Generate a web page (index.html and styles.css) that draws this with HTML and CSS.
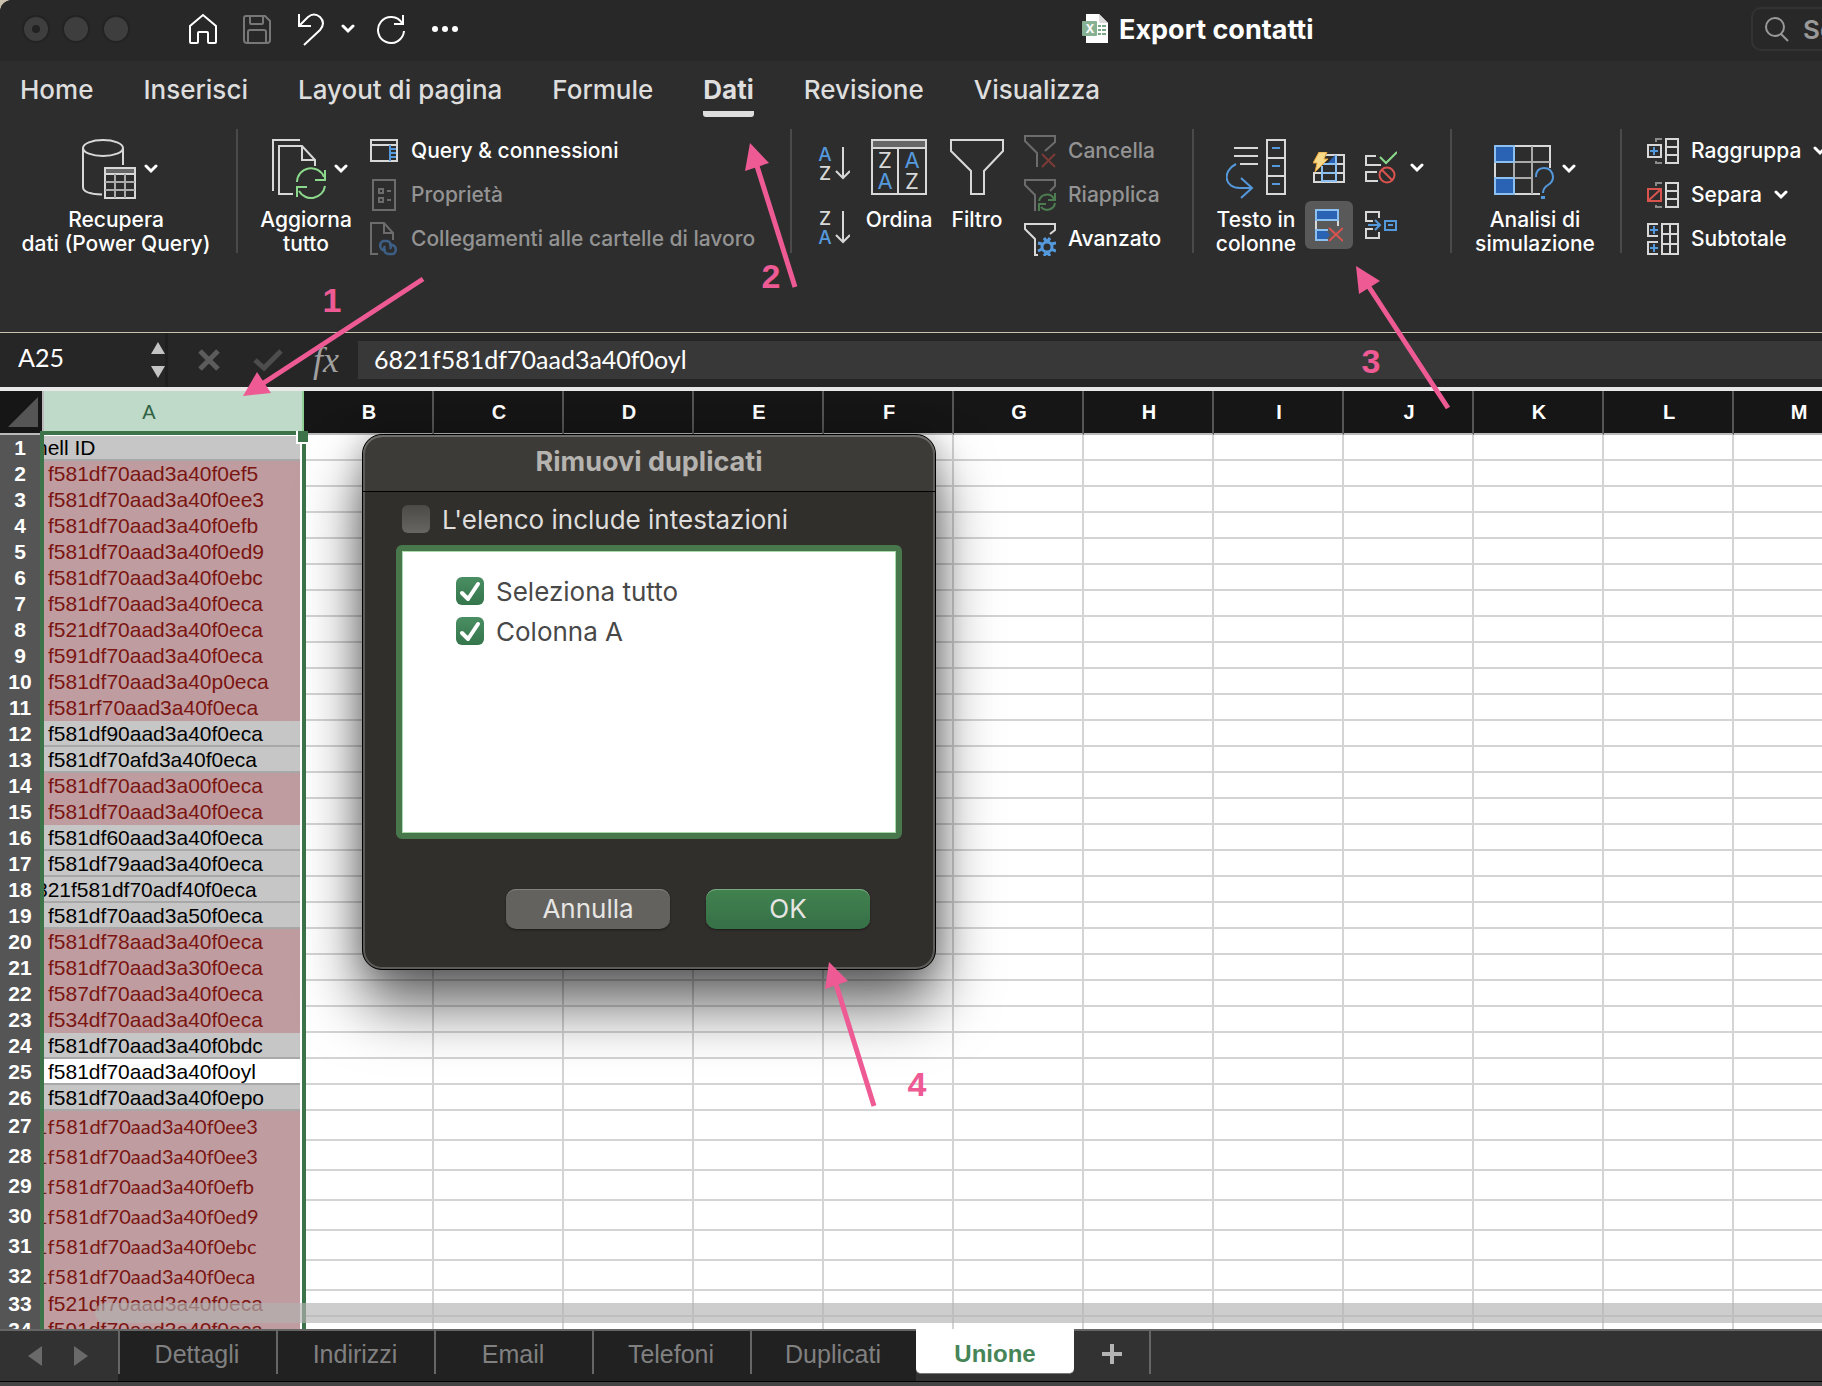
FILE: index.html
```html
<!DOCTYPE html>
<html lang="it">
<head>
    <meta charset="UTF-8">
    <meta name="viewport" content="width=device-width, initial-scale=1.0">
    <title>Export contatti</title>
    <link rel="stylesheet" href="styles.css">
</head>
<body>
<div class="app">
    <header class="titlebar">
        <div class="lights">
            <span class="light light-dot"></span>
            <span class="light"></span>
            <span class="light"></span>
        </div>
        <div class="quick">
            <button aria-label="Home"><svg width="30" height="32" viewBox="0 0 30 32"><path d="M2 29V13L15 2l13 11v16q0 1-1 1h-6q-1 0-1-1V20q0-1-1-1h-8q-1 0-1 1v9q0 1-1 1H3q-1 0-1-1z"/></svg></button>
            <button aria-label="Salva" class="dim"><svg width="30" height="32" viewBox="0 0 30 32"><path d="M4 3h19l5 5v19q0 3-3 3H5q-3 0-3-3V5q0-2 2-2zM8 3v7q0 1 1 1h11q1 0 1-1V3M6 30V19q0-2 2-2h14q2 0 2 2v11"/></svg></button>
            <button aria-label="Annulla"><svg width="30" height="34" viewBox="0 0 30 34"><path d="M3 2v12h12M3 14L12 5q6-5 12 0 6 6 0 13L8 33"/></svg></button>
            <button aria-label="Altre azioni" class="quick-chev"><svg class="chev" width="14" height="10" viewBox="0 0 14 10"><path d="M2 2l5 5 5-5"/></svg></button>
            <button aria-label="Ripeti"><svg width="30" height="32" viewBox="0 0 30 32"><path d="M26 10A13 13 0 1 0 28 18M27 2v9h-9"/></svg></button>
            <button aria-label="Altro" class="more"><svg width="30" height="10" viewBox="0 0 30 10"><circle cx="5" cy="5" r="3"/><circle cx="15" cy="5" r="3"/><circle cx="25" cy="5" r="3"/></svg></button>
        </div>
        <div class="doc-title">
            <svg width="28" height="32" viewBox="0 0 28 32">
                <path d="M5 1h13l9 9v20H5z" fill="#fff"/><path d="M18 1l9 9h-7q-2 0-2-2z" fill="#dcdcdc"/>
                <rect x="1" y="8" width="15" height="15" rx="1" fill="#86b193"/>
                <path d="M17 12h3v2h-3zM21 12h4v2h-4zM17 16h3v2h-3zM21 16h4v2h-4zM17 20h3v2h-3zM21 20h4v2h-4z" fill="#7aa688"/>
                <text x="9" y="20" class="badge-x">X</text>
            </svg>
            <span>Export contatti</span>
        </div>
        <div class="search">
            <svg width="28" height="28" viewBox="0 0 28 28"><circle cx="12" cy="12" r="9"/><path d="M18 19l7 7"/></svg>
            <input type="text" placeholder="Search" aria-label="Search">
        </div>
    </header>

    <nav class="menu">
        <a href="#">Home</a>
        <a href="#">Inserisci</a>
        <a href="#">Layout di pagina</a>
        <a href="#">Formule</a>
        <a href="#" class="active">Dati</a>
        <a href="#">Revisione</a>
        <a href="#">Visualizza</a>
    </nav>

    <section class="ribbon">
        <div class="group group-get">
            <button class="big">
                <span class="big-icon">
                    <svg width="62" height="60" viewBox="0 0 62 60">
                        <g class="ln"><ellipse cx="29" cy="9" rx="20" ry="8"/><path d="M9 9v39q0 7 19 7.500M49 9v17"/></g>
                        <rect x="31" y="29" width="30" height="6" fill="#666"/>
                        <g class="ln"><rect x="31" y="29" width="30" height="30"/><path d="M31 35h30"/><path d="M31 43h30M31 51h30M41 35v24M51 35v24" stroke="#aaa"/></g>
                    </svg>
                    <svg class="chev" width="14" height="10" viewBox="0 0 14 10"><path d="M2 2l5 5 5-5"/></svg>
                </span>
                Recupera<br>dati (Power Query)
            </button>
        </div>
        <div class="group group-refresh">
            <button class="big">
                <span class="big-icon">
                    <svg width="62" height="60" viewBox="0 0 62 60">
                        <g class="ln"><path d="M9 52V1h27M29 55H15V7h23l13 14v6M38 7v14h13"/></g>
                        <g class="ln" stroke="#8bd88c"><path d="M33 43A14 14 0 0 1 60 38M61 47A14 14 0 0 1 35 52M61 31v10H51M33 58V48h10"/></g>
                    </svg>
                    <svg class="chev" width="14" height="10" viewBox="0 0 14 10"><path d="M2 2l5 5 5-5"/></svg>
                </span>
                Aggiorna<br>tutto
            </button>
            <div class="stack">
                <button class="small">
                    <svg width="28" height="32" viewBox="0 0 28 32"><path class="ln" d="M1 5h26v21H1zM1 10h26"/><path class="bl" d="M20 10v16M21 14h5M21 18h5M21 22h5"/></svg>
                    Query &amp; connessioni
                </button>
                <button class="small" disabled>
                    <svg width="28" height="32" viewBox="0 0 28 32"><path class="ln" d="M3 1h22v30H3zM9 10h4v4H9zM9 19h4v4H9zM17 12h4M17 21h4"/></svg>
                    Proprietà
                </button>
                <button class="small" disabled>
                    <svg width="30" height="34" viewBox="0 0 30 34"><path class="ln" d="M9 32H2V1h13l9 10v7M15 1v10h9"/><path d="M17 28h-3a5 5 0 0 1 0-9h4a5 5 0 0 1 3 8M20 23h4a5 5 0 0 1 0 9h-5a5 5 0 0 1-3-8" fill="none" stroke="#3d5f85" stroke-width="2.500"/></svg>
                    Collegamenti alle cartelle di lavoro
                </button>
            </div>
        </div>
        <div class="group group-sort">
            <div class="sorts">
                <button aria-label="Ordina dalla A alla Z"><svg width="32" height="34" viewBox="0 0 32 34"><text x="7" y="14" class="lt lt-b">A</text><text x="7" y="33" class="lt">Z</text><path class="ln" d="M25 0v31M18 24l7 7 7-7"/></svg></button>
                <button aria-label="Ordina dalla Z alla A"><svg width="32" height="34" viewBox="0 0 32 34"><text x="7" y="14" class="lt">Z</text><text x="7" y="33" class="lt lt-b">A</text><path class="ln" d="M25 0v31M18 24l7 7 7-7"/></svg></button>
            </div>
            <button class="big big-sort">
                <span class="big-icon">
                    <svg width="56" height="60" viewBox="0 0 56 60"><rect x="1" y="1" width="54" height="8" fill="#666"/><path class="ln" d="M1 1h54v54H1zM1 9h54M27 9v46"/><text x="14" y="29" class="lt lt-l">Z</text><text x="41" y="29" class="lt lt-l lt-b">A</text><text x="14" y="50" class="lt lt-l lt-b">A</text><text x="41" y="50" class="lt lt-l">Z</text></svg>
                </span>
                Ordina
            </button>
            <button class="big big-filter">
                <span class="big-icon">
                    <svg width="54" height="60" viewBox="0 0 54 60"><path class="ln" d="M1 1h52v11L34 32v23H21V32L1 12z"/></svg>
                </span>
                Filtro
            </button>
            <div class="stack">
                <button class="small" disabled>
                    <svg width="32" height="34" viewBox="0 0 32 34"><path class="ln" d="M13 33V19L1 7V2h30v6L21 17"/><path d="M18 20l13 13M31 20L18 33" fill="none" stroke="#7c3b36" stroke-width="2"/></svg>
                    Cancella
                </button>
                <button class="small" disabled>
                    <svg width="32" height="34" viewBox="0 0 32 34"><path class="ln" d="M11 33V17L1 7V2h30v6l-5 5"/><path d="M15 23a8 8 0 0 1 15-2M31 15v7h-7M31 25a8 8 0 0 1-14 4M15 33v-7h7" fill="none" stroke="#4d7c50" stroke-width="2"/></svg>
                    Riapplica
                </button>
                <button class="small">
                    <svg width="32" height="34" viewBox="0 0 32 34"><path class="ln" d="M14 33h-3V17L1 7V2h30v6l-5 4"/><circle cx="23" cy="25" r="5" fill="none" stroke="#5599dd" stroke-width="3"/><path d="M23 20l-3-4M23 20l3-4M27 22l5-1M27 27l5 2M23 30l3 4M23 30l-3 4M18 22l-4-1M18 27l-4 2" fill="none" stroke="#5599dd" stroke-width="3"/></svg>
                    Avanzato
                </button>
            </div>
        </div>
        <div class="group group-tools">
            <button class="big big-text">
                <span class="big-icon">
                    <svg width="60" height="60" viewBox="0 0 60 60"><path class="ln" d="M8 9h24M8 17h24M14 25h18M41 1h18v54H41zM41 19h18M41 37h18"/><path class="bl" d="M46 9h8M46 27h8M46 45h8M10 25C-4 32-2 49 14 49h11M15 39l11 10-11 10"/></svg>
                </span>
                Testo in<br>colonne
            </button>
            <div class="tools">
                <button aria-label="Anteprima suggerimenti"><svg width="32" height="32" viewBox="0 0 32 32"><path class="ln" d="M13 3h18v27H1V20M23 3v27M1 21h30M9 12h22"/><path d="M14 12L22 3v9z" fill="#2a63b3"/><path d="M9 14v15h14V3M9 21h14M9 12h14" fill="none" stroke="#8cc0f0" stroke-width="2"/><path d="M6 0h8l-3 7h4L2 20l2-9H0z" fill="#f7d98a" stroke="#e5a23b"/></svg></button>
                <button aria-label="Convalida dati"><svg width="32" height="34" viewBox="0 0 32 34"><path class="ln" d="M11 5H1v9h15M12 21H1v9h12"/><path d="M15 6l6 6L32 1" fill="none" stroke="#8bd88c" stroke-width="2"/><g fill="none" stroke="#d9534f" stroke-width="2"><circle cx="22" cy="24" r="7.500"/><path d="M17 19l10 10"/></g></svg></button>
                <button aria-label="Opzioni convalida" class="tool-chev"><svg class="chev" width="14" height="10" viewBox="0 0 14 10"><path d="M2 2l5 5 5-5"/></svg></button>
                <button aria-label="Rimuovi duplicati" class="pressed"><svg width="28" height="34" viewBox="0 0 28 34"><path class="ln" d="M1 12v9M23 12v6"/><rect x="1" y="2" width="22" height="10" fill="#2a63b3" stroke="#8cc0f0" stroke-width="2"/><path d="M13 22H1v10h12" fill="none" stroke="#8cc0f0" stroke-width="2"/><path d="M2 23h9l4 4-4 4H2z" fill="#2a63b3"/><path d="M14 20l14 13M28 20L14 33" fill="none" stroke="#d9534f" stroke-width="2"/></svg></button>
                <button aria-label="Consolida"><svg width="32" height="30" viewBox="0 0 32 30"><path class="ln" d="M14 8V2H1v9h7M8 19H1v9h13v-6"/><path d="M3 15h12M10 10l5 5-5 5M20 11h11v9H20zM23 15h5" fill="none" stroke="#5599dd" stroke-width="2"/></svg></button>
            </div>
        </div>
        <div class="group group-sim">
            <button class="big big-sim">
                <span class="big-icon">
                    <svg width="60" height="60" viewBox="0 0 60 60"><path class="ln" d="M46 55H1V7h55v22"/><path d="M1 23h55M1 39h38M20 7v48M38 7v48" fill="none" stroke="#aaa" stroke-width="2"/><path d="M1 7h19v16H1zM1 39h19v16H1z" fill="#2a63b3" stroke="#8cc0f0" stroke-width="2"/><path d="M42 38q0-9 8-9t9 9q0 5-5 8t-5 8" class="bl"/><path d="M47 57h4v3h-4z" fill="#5599dd"/></svg>
                    <svg class="chev" width="14" height="10" viewBox="0 0 14 10"><path d="M2 2l5 5 5-5"/></svg>
                </span>
                Analisi di<br>simulazione
            </button>
        </div>
        <div class="group group-outline">
            <div class="stack">
                <button class="small">
                    <svg width="32" height="34" viewBox="0 0 32 34"><path class="ln" d="M19 5h12v24H19zM19 13h12M19 21h12M1 11h13v12H1z"/><path d="M9 8V5h6M9 27v2h6" class="gr"/><path class="bl" d="M7 13v8M3 17h8"/></svg>
                    Raggruppa
                    <svg class="chev" width="14" height="10" viewBox="0 0 14 10"><path d="M2 2l5 5 5-5"/></svg>
                </button>
                <button class="small">
                    <svg width="32" height="34" viewBox="0 0 32 34"><path class="ln" d="M19 5h12v24H19zM19 13h12M19 21h12"/><path d="M9 8V5h6M9 27v2h6" class="gr"/><path d="M1 11h13v12H1zM1 23l13-12" fill="none" stroke="#d9534f" stroke-width="2"/></svg>
                    Separa
                    <svg class="chev" width="14" height="10" viewBox="0 0 14 10"><path d="M2 2l5 5 5-5"/></svg>
                </button>
                <button class="small">
                    <svg width="32" height="34" viewBox="0 0 32 34"><path class="ln" d="M15 2h16v30H15zM15 12h16M15 22h16M23 2v30M11 2H1v12h10M11 20H1v12h10"/><path class="bl" d="M7 4v8M3 8h8M7 22v8M3 26h8"/></svg>
                    Subtotale
                </button>
            </div>
        </div>
    </section>

    <section class="formula-bar">
        <div class="name-box">
            <input type="text" value="A25" aria-label="Casella nome">
            <button class="spin" aria-label="Scorri nomi"><svg width="16" height="38" viewBox="0 0 16 38"><path d="M8 1l7 12H1zM8 37l7-12H1z" fill="#c4c4c4"/></svg></button>
        </div>
        <div class="fx">
            <button aria-label="Annulla modifica"><svg width="28" height="24" viewBox="0 0 28 24"><path d="M5 3l18 18M23 3L5 21" stroke="#5c5c5c" stroke-width="5"/></svg></button>
            <button aria-label="Conferma"><svg width="30" height="24" viewBox="0 0 30 24"><path d="M2 12l9 8L28 3" fill="none" stroke="#4d4d4d" stroke-width="5"/></svg></button>
            <button aria-label="Inserisci funzione" class="fx-label">fx</button>
        </div>
        <input class="formula" type="text" value="6821f581df70aad3a40f0oyl" aria-label="Barra della formula">
    </section>

    <main class="sheet">
        <table class="grid">
            <thead>
                <tr id="columns"></tr>
            </thead>
            <tbody id="rows"></tbody>
        </table>
        <div class="selection"><span class="handle"></span></div>
        <div class="scrollbar"></div>

        <div class="dialog" role="dialog" aria-labelledby="dialogTitle">
            <h2 id="dialogTitle">Rimuovi duplicati</h2>
            <div class="dialog-body">
                <label class="check"><input type="checkbox"> L'elenco include intestazioni</label>
                <div class="list">
                    <label class="check"><input type="checkbox" checked> Seleziona tutto</label>
                    <label class="check"><input type="checkbox" checked> Colonna A</label>
                </div>
                <div class="actions">
                    <button>Annulla</button>
                    <button class="ok">OK</button>
                </div>
            </div>
        </div>
    </main>

    <footer class="tabs">
        <div class="tab-nav">
            <button aria-label="Foglio precedente"><svg width="16" height="22" viewBox="0 0 16 22"><path d="M15 1v20L1 11z"/></svg></button>
            <button aria-label="Foglio successivo"><svg width="16" height="22" viewBox="0 0 16 22"><path d="M1 1v20l14-10z"/></svg></button>
        </div>
        <button class="tab">Dettagli</button>
        <button class="tab">Indirizzi</button>
        <button class="tab">Email</button>
        <button class="tab">Telefoni</button>
        <button class="tab tab-wide">Duplicati</button>
        <button class="tab current">Unione</button>
        <button class="add" aria-label="Aggiungi foglio"><svg width="20" height="20" viewBox="0 0 20 20"><path d="M10 0v20M0 10h20" stroke="#b4b4b4" stroke-width="4"/></svg></button>
    </footer>

    <svg class="notes">
        <path d="M423 279L262 384M795 287L757 166M1448 408L1369 287M874 1106L836 984"/>
        <polygon points="243,396 257,372 271,393"/>
        <polygon points="750,143 745,171 769,163"/>
        <polygon points="1356,266 1359,294 1380,281"/>
        <polygon points="829,962 825,989 848,981"/>
        <text x="332" y="312">1</text>
        <text x="771" y="288">2</text>
        <text x="1371" y="373">3</text>
        <text x="917" y="1096">4</text>
    </svg>
</div>
<script src="script.js"></script>
</body>
</html>
```
FILE: styles.css
```css
* {
    margin: 0;
    padding: 0;
    box-sizing: border-box;
}
body {
    background: #c9c1ac;
    font-family: Inter, "Liberation Sans", sans-serif;
    color: #fff;
}
button {
    background: none;
    border: none;
    color: inherit;
    font: inherit;
}
input {
    background: none;
    border: none;
    outline: none;
    color: inherit;
    font: inherit;
}
svg {
    display: block;
    flex: none;
}
.app {
    position: relative;
    display: flex;
    flex-direction: column;
    height: 100vh;
    overflow: hidden;
    background: #2d2d2d;
    border-radius: 12px 0 0 0;
}

/* title bar */
.titlebar {
    display: flex;
    flex: none;
    align-items: center;
    height: 61px;
    padding: 0 0 3px 24px;
    background: #282828;
}
.lights {
    display: flex;
    gap: 16px;
    margin-right: 60px;
}
.light {
    display: grid;
    place-items: center;
    width: 24px;
    height: 24px;
    border-radius: 50%;
    background: #3e3e3e;
    box-shadow: 0 0 0 2px #232323;
}
.light-dot::after {
    content: "";
    width: 8px;
    height: 8px;
    border-radius: 50%;
    background: #222;
}
.quick {
    display: flex;
    align-items: center;
    gap: 24px;
    width: 893px;
    flex: none;
}
.quick svg {
    fill: none;
    stroke: #fff;
    stroke-width: 2;
}
.quick .dim svg {
    stroke: #777;
}
.quick .quick-chev {
    margin: 0 -3px 0 -9px;
}
.quick .more svg {
    fill: #fff;
    stroke: none;
}
.doc-title {
    display: flex;
    align-items: center;
    gap: 10px;
    flex: none;
    width: 670px;
    font-size: 27px;
    font-weight: 700;
}
.badge-x {
    fill: #fff;
    font-size: 12px;
    text-anchor: middle;
}
.search {
    display: flex;
    flex: 1;
    align-items: center;
    gap: 12px;
    min-width: 0;
    height: 44px;
    padding-left: 10px;
    border: 2px solid #333;
    border-right: none;
    border-radius: 10px 0 0 10px;
    font-size: 26px;
    font-weight: 600;
}
.search svg {
    fill: none;
    stroke: #999;
    stroke-width: 2;
}
.search input {
    min-width: 0;
    width: 100%;
}
.search input::placeholder {
    color: #999;
}

/* ribbon tabs */
.menu {
    display: flex;
    flex: none;
    gap: 50px;
    height: 56px;
    padding: 14px 20px 0;
}
.menu a {
    color: #dedede;
    font-size: 26px;
    font-weight: 500;
    line-height: 30px;
    white-space: nowrap;
    text-decoration: none;
}
.menu .active {
    font-weight: 700;
    border-bottom: 6px solid #dedede;
    border-radius: 3px;
}

/* ribbon */
.ribbon {
    display: flex;
    flex: none;
    height: 215px;
    padding-top: 12px;
    font-size: 21px;
    font-weight: 500;
    line-height: 24px;
}
.group {
    display: flex;
    flex: none;
    align-items: flex-start;
    height: 124px;
    border-right: 2px solid #4a4a4a;
    white-space: nowrap;
}
.group-get {
    width: 238px;
    padding-left: 16px;
}
.group-get .big {
    width: 200px;
}
.group-refresh {
    width: 554px;
    padding-left: 16px;
}
.group-refresh .big {
    width: 104px;
}
.group-refresh .stack {
    margin-left: 11px;
}
.group-sort {
    width: 402px;
    padding-left: 26px;
}
.group-tools {
    width: 258px;
    padding-left: 17px;
}
.group-sim {
    width: 170px;
    padding-left: 17px;
}
.group-outline {
    padding-left: 25px;
    border-right: none;
}
.big {
    padding-top: 10px;
}
.big-icon {
    display: flex;
    align-items: center;
    justify-content: center;
    gap: 8px;
    height: 60px;
    margin-bottom: 9px;
}
.big-sort {
    width: 80px;
    margin-left: 9px;
}
.big-filter {
    width: 60px;
    margin-left: 8px;
}
.big-text {
    width: 90px;
}
.big-sim {
    width: 132px;
}
.chev {
    fill: none;
    stroke: #fff;
    stroke-width: 3;
    stroke-linecap: round;
}
.quick .chev {
    stroke-width: 3;
}
.stack {
    display: flex;
    flex-direction: column;
}
.small {
    display: flex;
    align-items: center;
    gap: 12px;
    height: 44px;
}
.group-refresh .small svg {
    width: 30px;
}
.group-sort .stack {
    margin-left: 17px;
}
.small:disabled {
    color: #939393;
}
.ln {
    fill: none;
    stroke: #d8d8d8;
    stroke-width: 2;
}
.ln[stroke] {
    stroke: #8bd88c;
}
.small:disabled .ln {
    stroke: #6c6c6c;
}
.gr {
    fill: none;
    stroke: #8a8a8a;
    stroke-width: 2;
}
.bl {
    fill: none;
    stroke: #5599dd;
    stroke-width: 2;
}
.sorts {
    display: flex;
    flex-direction: column;
    gap: 30px;
    padding-top: 18px;
}
.lt {
    fill: #d8d8d8;
    font-size: 19px;
    font-weight: 500;
    text-anchor: middle;
}
.lt-l {
    font-size: 22px;
    font-weight: 400;
}
.lt-b {
    fill: #5599dd;
}
.tools {
    display: grid;
    grid-template-columns: 48px 48px 16px;
    gap: 9px 4px;
    padding: 15px 0 0 4px;
}
.tools button {
    display: grid;
    place-items: center;
    height: 48px;
}
.tools .pressed {
    background: #595959;
    border-radius: 6px;
}

/* formula bar */
.formula-bar {
    display: flex;
    flex: none;
    align-items: center;
    height: 59px;
    background: #262626;
    border-top: 1px solid #c9c1ac;
    border-bottom: 4px solid #e8e8e8;
    font-family: Lato, "Liberation Sans", sans-serif;
    font-size: 25px;
}
.name-box {
    display: flex;
    align-items: center;
    width: 168px;
    height: 100%;
    padding-left: 18px;
    border-right: 3px solid #1f1f1f;
}
.name-box input {
    width: 132px;
    padding-bottom: 6px;
}
.fx {
    display: flex;
    align-items: center;
    gap: 30px;
    width: 190px;
    padding-left: 27px;
}
.fx-label {
    color: #a0a0a0;
    font-family: "Liberation Serif", serif;
    font-size: 36px;
    font-style: italic;
    line-height: 38px;
}
.formula {
    flex: 1;
    min-width: 0;
    height: 38px;
    padding: 0 0 2px 16px;
    background: #383838;
}

/* sheet */
.sheet {
    position: relative;
    flex: 1;
    min-height: 0;
    overflow: hidden;
    background: #fff;
    font-family: "Liberation Sans", sans-serif;
}
.grid {
    width: 1864px;
    table-layout: fixed;
    border-collapse: separate;
    border-spacing: 0;
}
.grid th {
    background: #161616;
    font-size: 20px;
}
.grid thead th {
    width: 130px;
    height: 44px;
    padding-left: 2px;
    border-right: 2px solid #555;
    border-bottom: 2px solid #bbb;
}
.grid thead .corner {
    width: 44px;
    padding: 0;
    border-right-color: #bbb;
}
.corner svg {
    margin-left: 8px;
    fill: #555;
}
.grid thead .col-a {
    width: 260px;
    padding-right: 50px;
    background: #bfdac8;
    border-right-color: #8fcf94;
    color: #2f6243;
    font-weight: 400;
}
.grid tbody tr {
    height: 26px;
}
.grid tbody .tall {
    height: 30px;
}
.grid tbody th {
    padding-right: 4px;
    background: #555;
    font-size: 21px;
    line-height: 24px;
}
.grid td {
    border-right: 2px solid #d4d4d4;
    border-bottom: 2px solid #d4d4d4;
}
.grid .id {
    overflow: hidden;
    padding: 2px 0 0 4px;
    border-bottom-color: #a8a8a8;
    background: #c6c6c6;
    color: #000;
    font-size: 21px;
    line-height: 22px;
    white-space: nowrap;
}
.grid .dup {
    border-bottom-color: #bf9c9f;
    background: #bf9c9f;
    color: #7a1512;
}
.grid .cursor {
    background: #fff;
}
.grid .tall .id {
    font-family: Lato, "Liberation Sans", sans-serif;
    font-size: 20px;
    text-indent: -12px;
}
.grid .cut {
    text-indent: -12px;
}
.selection {
    position: absolute;
    top: 40px;
    bottom: -4px;
    left: 40px;
    width: 266px;
    border: 4px solid #3c7349;
    box-shadow: inset -2px 0 #fff, inset 0 1px #fff;
}
.handle {
    position: absolute;
    top: -4px;
    right: -6px;
    width: 12px;
    height: 13px;
    background: #3c7349;
    border-left: 2px solid #fff;
    border-bottom: 2px solid #fff;
}
.scrollbar {
    position: absolute;
    left: 95px;
    right: 0;
    bottom: 6px;
    height: 20px;
    border-radius: 10px 0 0 10px;
    background: rgba(178, 178, 178, 0.65);
}

/* dialog */
.dialog {
    position: absolute;
    top: 43px;
    left: 362px;
    width: 574px;
    background: #312f2c;
    border: 1px solid #000;
    border-radius: 20px;
    box-shadow: inset 0 0 0 2px #5d5c59, 0 36px 60px rgba(0, 0, 0, 0.6), 0 0 30px rgba(0, 0, 0, 0.25);
    font-family: Inter, "Liberation Sans", sans-serif;
    font-size: 26px;
}
.dialog h2 {
    height: 57px;
    background: #3d3b38;
    border-bottom: 1px solid #000;
    border-radius: 20px 20px 0 0;
    box-shadow: inset 0 2px #6f6e6b, inset 2px 0 #5d5c59, inset -2px 0 #5d5c59;
    color: #b5b3af;
    font-size: 27px;
    font-weight: 700;
    line-height: 54px;
    text-align: center;
}
.dialog-body {
    padding: 13px 33px 40px;
}
.check {
    display: flex;
    align-items: center;
    gap: 12px;
    height: 28px;
    color: #dfdedc;
}
.dialog-body > .check {
    padding-left: 6px;
}
.check input {
    appearance: none;
    width: 28px;
    height: 28px;
    border-radius: 6px;
    background: linear-gradient(#4b4a47, #676663);
}
.check input:checked {
    background: url("data:image/svg+xml,%3Csvg xmlns='http://www.w3.org/2000/svg' viewBox='0 0 28 28'%3E%3Cpath d='M6 16l6 6L22 7' fill='none' stroke='%23fff' stroke-width='4' stroke-linecap='round' stroke-linejoin='round'/%3E%3C/svg%3E"), linear-gradient(#4a8f63, #35754b);
}
.list {
    display: flex;
    flex-direction: column;
    gap: 12px;
    height: 294px;
    margin: 12px 0 50px;
    padding: 26px 54px;
    background: #fff;
    border: 6px solid #48774c;
    border-radius: 6px;
    box-shadow: inset 0 0 0 1px #a9d8ac;
}
.list .check {
    color: #484848;
}
.actions {
    display: flex;
    justify-content: flex-end;
    gap: 36px;
    padding-right: 32px;
}
.actions button {
    width: 164px;
    height: 40px;
    padding-bottom: 2px;
    background: #64625e;
    border-radius: 10px;
    box-shadow: inset 0 1px #83817d, 0 1px 2px #1c1b19;
    color: #e6e5e3;
}
.actions .ok {
    background: linear-gradient(#41824f, #367047);
    box-shadow: inset 0 1px #7aa985, 0 1px 2px #1c1b19;
}

/* sheet tabs */
.tabs {
    display: flex;
    flex: none;
    height: 57px;
    background: linear-gradient(#323232 52px, #000 52px, #000 53px, #444 53px);
    font-family: "Liberation Sans", sans-serif;
    font-size: 25px;
}
.tab-nav {
    display: flex;
    align-items: center;
    gap: 30px;
    width: 118px;
    height: 52px;
    padding-left: 27px;
    border-top: 2px solid #666;
}
.tab-nav svg {
    fill: #6a6a6a;
}
.tab {
    width: 158px;
    height: 52px;
    padding-bottom: 4px;
    background: linear-gradient(#666, #666) 0 0 / 2px 43px no-repeat #212121;
    border-top: 2px solid #666;
    color: #808080;
}
.tab-wide {
    width: 166px;
}
.tabs .current {
    height: 45px;
    padding: 6px 0 0;
    background: #fff;
    border-top: none;
    border-bottom: 1px solid #777;
    border-radius: 0 0 5px 5px;
    color: #468557;
    font-size: 24px;
    font-weight: 700;
}
.add {
    display: grid;
    flex: 1;
    align-content: center;
    height: 52px;
    padding: 0 0 4px 28px;
    background: linear-gradient(#666, #666) 75px 0 / 2px 43px no-repeat;
    border-top: 2px solid #666;
}

/* numbered arrows */
.notes {
    position: absolute;
    top: 0;
    left: 0;
    width: 100%;
    height: 100%;
    pointer-events: none;
    fill: #ee5a94;
    font-family: "Liberation Sans", sans-serif;
    font-size: 34px;
    font-weight: 700;
    text-anchor: middle;
}
.notes path {
    stroke: #ee5a94;
    stroke-width: 5;
}
```
FILE: script.js
```javascript
const columns = 'BCDEFGHIJKLM'.split('');

// [text, classes] for column A, one entry per row
const ids = [
    ['nell ID', 'cut'],
    ['f581df70aad3a40f0ef5', 'dup'],
    ['f581df70aad3a40f0ee3', 'dup'],
    ['f581df70aad3a40f0efb', 'dup'],
    ['f581df70aad3a40f0ed9', 'dup'],
    ['f581df70aad3a40f0ebc', 'dup'],
    ['f581df70aad3a40f0eca', 'dup'],
    ['f521df70aad3a40f0eca', 'dup'],
    ['f591df70aad3a40f0eca', 'dup'],
    ['f581df70aad3a40p0eca', 'dup'],
    ['f581rf70aad3a40f0eca', 'dup'],
    ['f581df90aad3a40f0eca', ''],
    ['f581df70afd3a40f0eca', ''],
    ['f581df70aad3a00f0eca', 'dup'],
    ['f581df70aad3a40f0eca', 'dup'],
    ['f581df60aad3a40f0eca', ''],
    ['f581df79aad3a40f0eca', ''],
    ['821f581df70adf40f0eca', 'cut'],
    ['f581df70aad3a50f0eca', ''],
    ['f581df78aad3a40f0eca', 'dup'],
    ['f581df70aad3a30f0eca', 'dup'],
    ['f587df70aad3a40f0eca', 'dup'],
    ['f534df70aad3a40f0eca', 'dup'],
    ['f581df70aad3a40f0bdc', ''],
    ['f581df70aad3a40f0oyl', 'cursor'],
    ['f581df70aad3a40f0epo', ''],
    ['1f581df70aad3a40f0ee3', 'dup'],
    ['1f581df70aad3a40f0ee3', 'dup'],
    ['1f581df70aad3a40f0efb', 'dup'],
    ['1f581df70aad3a40f0ed9', 'dup'],
    ['1f581df70aad3a40f0ebc', 'dup'],
    ['1f581df70aad3a40f0eca', 'dup'],
    ['f521df70aad3a40f0eca', 'dup'],
    ['f591df70aad3a40f0eca', 'dup']
];

document.getElementById('columns').innerHTML =
    '<th class="corner"><svg width="30" height="30" viewBox="0 0 30 30"><path d="M30 0v30H0z"/></svg></th>' +
    '<th class="col-a">A</th>' +
    columns.map(name => `<th>${name}</th>`).join('');

document.getElementById('rows').innerHTML = ids.map(([text, cls], i) => {
    const n = i + 1;
    const tall = n >= 27 && n <= 32 ? ' class="tall"' : '';
    return `<tr${tall}><th>${n}</th><td class="id ${cls}">${text}</td>${'<td></td>'.repeat(columns.length)}</tr>`;
}).join('');
```
